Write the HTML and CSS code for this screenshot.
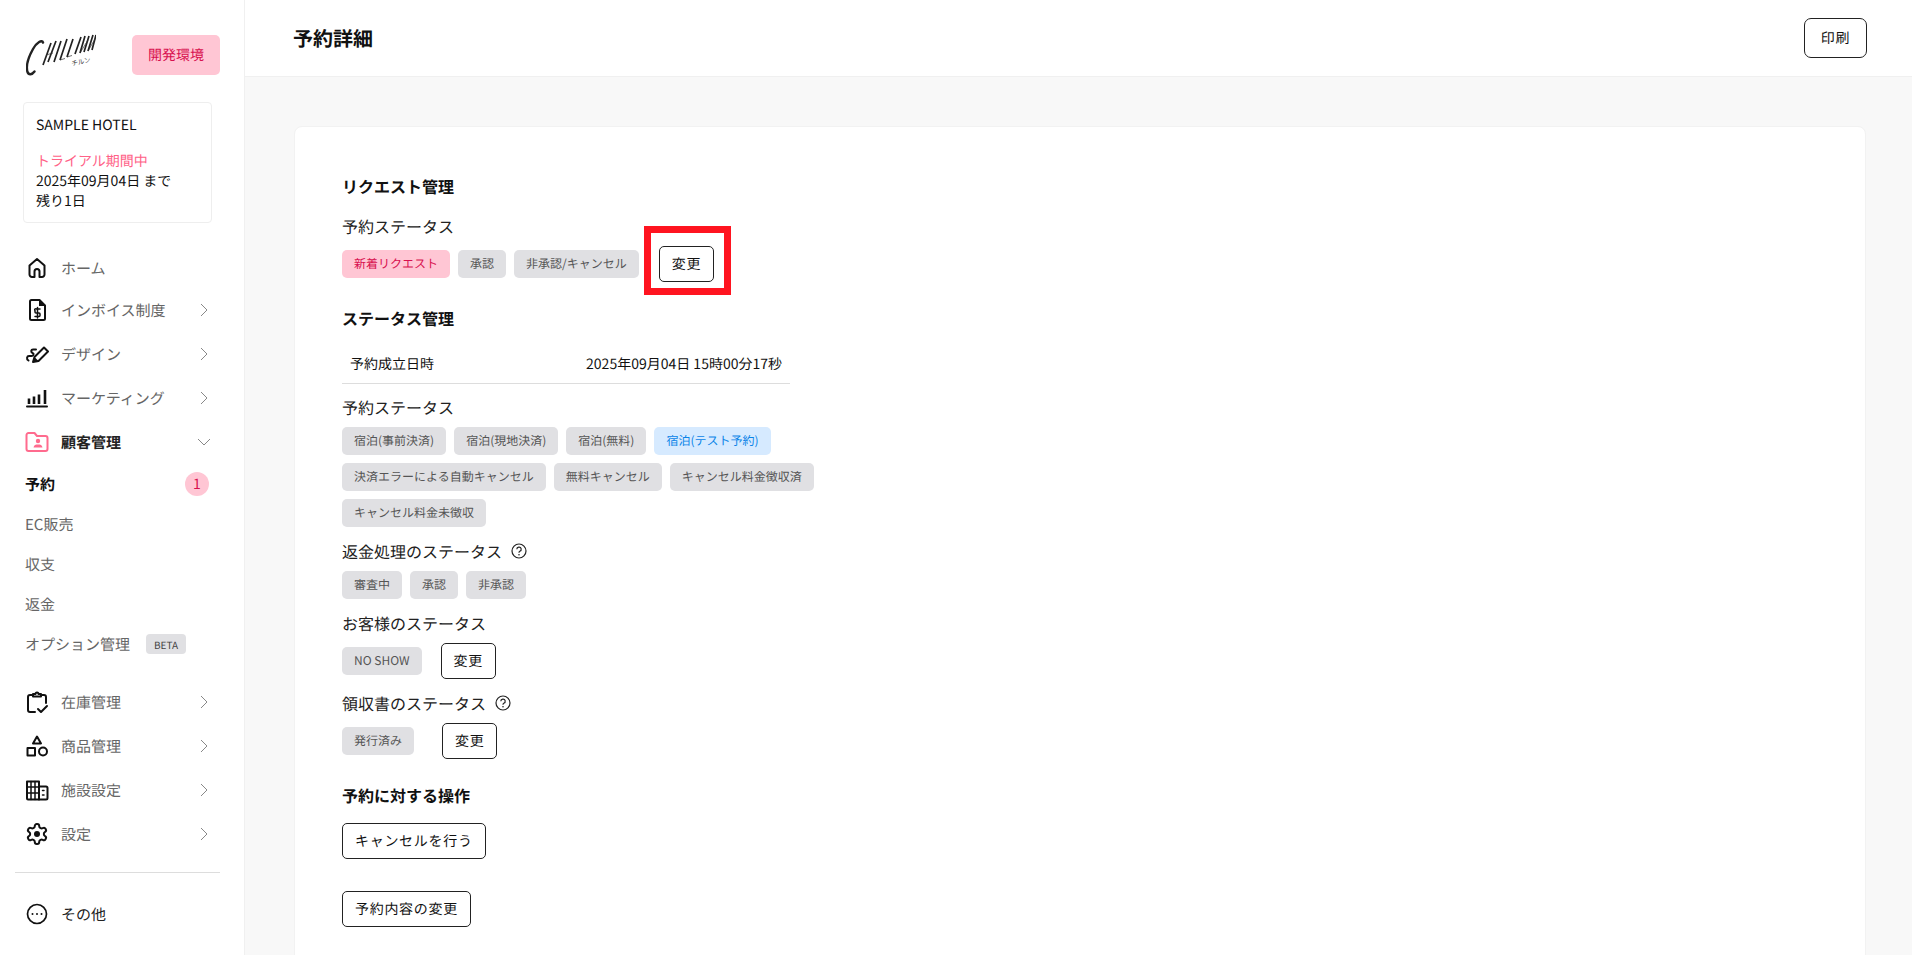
FILE: index.html
```html
<!DOCTYPE html>
<html lang="ja">
<head>
<meta charset="utf-8">
<title>予約詳細</title>
<link rel="stylesheet" href="styles.css">
</head>
<body>
<div class="app">
  <aside class="sidebar">
    <div class="brand">
      <svg class="logo" viewBox="0 0 70 42" aria-hidden="true">
        <path class="logo-c" d="M17 8.500C16 5.500 11 8 7 15C2 24 0 33 1.500 38C2.500 41 6 41 8.500 37.500"/>
        <path class="logo-thick" d="M17 31L25 9M22 28L30 7M28 28L35 7M34 26L41 5M41 23L47 5M49 20L55 3M54 19L59 2M58 18L63 2M62 17L67 1M66 16L70 1"/>
        <path class="logo-thin" d="M20 21L27 19M34 26L39 24.500M41 23L46 21.500M54 19L62 6M62 17L69 5"/>
        <text class="logo-kana" x="46" y="32" transform="rotate(-12 46 32)">チルン</text>
      </svg>
      <span class="env">開発環境</span>
    </div>
    <div class="hotel">
      <p class="hotel-name">SAMPLE HOTEL</p>
      <p class="trial">トライアル期間中</p>
      <p>2025年09月04日 まで</p>
      <p>残り1日</p>
    </div>
    <nav class="nav">
      <a class="nav-item nav-home">
        <svg class="icon" viewBox="0 0 24 24"><path d="M12 3L4.500 9.500V18.500A2.500 2.500 0 0 0 7 21H9.500V15.500A2.500 2.500 0 0 1 14.500 15.500V21H17A2.500 2.500 0 0 0 19.500 18.500V9.500Z"/></svg>
        <span>ホーム</span>
      </a>
      <a class="nav-item">
        <svg class="icon" viewBox="0 0 24 24"><path d="M6.500 2H14.500L20 7.500V20.500A1.500 1.500 0 0 1 18.500 22H6.500A1.500 1.500 0 0 1 5 20.500V3.500A1.500 1.500 0 0 1 6.500 2Z"/><path class="solid" d="M14 2L20 8H14Z"/><path class="thin" d="M15 11H11.500A1 1 0 0 0 10 12.500V14A1 1 0 0 0 11 15H14A1 1 0 0 1 15 16V17.500A1 1 0 0 1 14 18.500H10M12.500 9.500V20"/></svg>
        <span>インボイス制度</span>
        <svg class="chev" viewBox="0 0 8 14"><path d="M1 1L7 7L1 13"/></svg>
      </a>
      <a class="nav-item">
        <svg class="icon" viewBox="0 0 24 24"><path d="M8 20L9.500 15L19 5.500L23 9.500L13.500 19Z"/><path class="solid" d="M8 20L9.500 15L13.500 19Z"/><path d="M11 7.500H8C6 7.500 5.500 10 7.500 11C9.500 12 8.500 14 6.500 14H4C2 14 1 17 3.500 18.500"/></svg>
        <span>デザイン</span>
        <svg class="chev" viewBox="0 0 8 14"><path d="M1 1L7 7L1 13"/></svg>
      </a>
      <a class="nav-item">
        <svg class="icon icon-bars" viewBox="0 0 24 24"><path d="M2 20.500H22"/><path class="bar" d="M4 12.500V18M9 10.500V18M14 8.500V18M20 4V18"/></svg>
        <span>マーケティング</span>
        <svg class="chev" viewBox="0 0 8 14"><path d="M1 1L7 7L1 13"/></svg>
      </a>
      <a class="nav-item nav-current">
        <svg class="icon icon-pink" viewBox="0 0 24 24"><path d="M3.500 3H9.500L12 6H20.500A2 2 0 0 1 22.500 8V19A2 2 0 0 1 20.500 21H3.500A2 2 0 0 1 1.500 19V5A2 2 0 0 1 3.500 3Z"/><circle class="fill-pink" cx="13" cy="11" r="2.200"/><path class="fill-pink" d="M8.500 17.500C9 15 10.500 14.500 13 14.500C15.500 14.500 17 15 17.500 17.500Z"/></svg>
        <span>顧客管理</span>
        <svg class="chev-down" viewBox="0 0 14 8"><path d="M1 1L7 7L13 1"/></svg>
      </a>
      <ul class="subnav">
        <li class="sub-item sub-active"><span>予約</span><span class="count">1</span></li>
        <li class="sub-item"><span>EC販売</span></li>
        <li class="sub-item"><span>収支</span></li>
        <li class="sub-item"><span>返金</span></li>
        <li class="sub-item"><span>オプション管理</span><span class="beta">BETA</span></li>
      </ul>
      <a class="nav-item">
        <svg class="icon" viewBox="0 0 24 24"><path d="M8 5H5A2 2 0 0 0 3 7V20A2 2 0 0 0 5 22H10"/><path d="M16 5H19A2 2 0 0 1 21 7V13"/><path d="M8 6.500V4H10.500A1.500 1.500 0 0 1 13.500 4H16V6.500Z"/><path d="M13 19L16 22L22 16"/></svg>
        <span>在庫管理</span>
        <svg class="chev" viewBox="0 0 8 14"><path d="M1 1L7 7L1 13"/></svg>
      </a>
      <a class="nav-item">
        <svg class="icon" viewBox="0 0 24 24"><path d="M12 2.500L16 9.500H8Z"/><rect x="2.500" y="14" width="7.500" height="7.500"/><circle cx="18" cy="17.500" r="4"/></svg>
        <span>商品管理</span>
        <svg class="chev" viewBox="0 0 8 14"><path d="M1 1L7 7L1 13"/></svg>
      </a>
      <a class="nav-item">
        <svg class="icon" viewBox="0 0 24 24"><path d="M2 3.500H14V21.500H3A1 1 0 0 1 2 20.500Z"/><path d="M14 8.500H21A1.500 1.500 0 0 1 22.500 10V20A1.500 1.500 0 0 1 21 21.500H14"/><path class="thin" d="M6 3.500V21.500M10 3.500V21.500M2 9H14M2 15H14"/><path class="thin" d="M17.500 12.500H19M17.500 17H19"/></svg>
        <span>施設設定</span>
        <svg class="chev" viewBox="0 0 8 14"><path d="M1 1L7 7L1 13"/></svg>
      </a>
      <a class="nav-item">
        <svg class="icon" viewBox="0 0 24 24"><path d="M12.220 2h-.44a2 2 0 0 0-2 2v.18a2 2 0 0 1-1 1.730l-.43.25a2 2 0 0 1-2 0l-.15-.08a2 2 0 0 0-2.730.73l-.22.38a2 2 0 0 0 .73 2.730l.15.1a2 2 0 0 1 1 1.720v.51a2 2 0 0 1-1 1.740l-.15.09a2 2 0 0 0-.73 2.730l.22.38a2 2 0 0 0 2.730.73l.15-.08a2 2 0 0 1 2 0l.43.25a2 2 0 0 1 1 1.730V20a2 2 0 0 0 2 2h.44a2 2 0 0 0 2-2v-.18a2 2 0 0 1 1-1.730l.43-.25a2 2 0 0 1 2 0l.15.08a2 2 0 0 0 2.730-.73l.22-.39a2 2 0 0 0-.73-2.730l-.15-.08a2 2 0 0 1-1-1.740v-.5a2 2 0 0 1 1-1.740l.15-.09a2 2 0 0 0 .73-2.730l-.22-.38a2 2 0 0 0-2.730-.73l-.15.08a2 2 0 0 1-2 0l-.43-.25a2 2 0 0 1-1-1.730V4a2 2 0 0 0-2-2z"/><circle class="solid" cx="12" cy="12" r="3"/></svg>
        <span>設定</span>
        <svg class="chev" viewBox="0 0 8 14"><path d="M1 1L7 7L1 13"/></svg>
      </a>
    </nav>
    <hr class="divider">
    <a class="nav-item nav-other">
      <svg class="icon icon-other" viewBox="0 0 24 24"><circle cx="12" cy="12" r="9.500"/><circle class="solid" cx="7.500" cy="12" r="1"/><circle class="solid" cx="12" cy="12" r="1"/><circle class="solid" cx="16.500" cy="12" r="1"/></svg>
      <span>その他</span>
    </a>
  </aside>

  <main class="main">
    <header class="topbar">
      <h1 class="page-title">予約詳細</h1>
      <button class="btn btn-print">印刷</button>
    </header>
    <div class="content">
      <section class="card">
        <h2 class="heading">リクエスト管理</h2>
        <h3 class="label label-first">予約ステータス</h3>
        <div class="chips chips-action">
          <span class="chip chip-pink">新着リクエスト</span>
          <span class="chip">承認</span>
          <span class="chip">非承認/キャンセル</span>
          <span class="annotated">
            <button class="btn">変更</button>
            <span class="red-box"></span>
          </span>
        </div>

        <h2 class="heading heading-status">ステータス管理</h2>
        <div class="info-row"><span>予約成立日時</span><span>2025年09月04日 15時00分17秒</span></div>

        <h3 class="label label-stay">予約ステータス</h3>
        <div class="chips">
          <span class="chip">宿泊(事前決済)</span>
          <span class="chip">宿泊(現地決済)</span>
          <span class="chip">宿泊(無料)</span>
          <span class="chip chip-blue">宿泊(テスト予約)</span>
          <span class="chip">決済エラーによる自動キャンセル</span>
          <span class="chip">無料キャンセル</span>
          <span class="chip">キャンセル料金徴収済</span>
          <span class="chip">キャンセル料金未徴収</span>
        </div>

        <h3 class="label label-next">返金処理のステータス
          <svg class="help" viewBox="0 0 16 16"><circle cx="8" cy="8" r="7"/><path d="M5.800 6.200A2.200 2.200 0 1 1 8.800 8.300C8.200 8.600 8 9 8 9.800"/><circle class="help-dot" cx="8" cy="11.800" r=".8"/></svg>
        </h3>
        <div class="chips">
          <span class="chip">審査中</span>
          <span class="chip">承認</span>
          <span class="chip">非承認</span>
        </div>

        <h3 class="label label-next">お客様のステータス</h3>
        <div class="chips chips-action">
          <span class="chip">NO SHOW</span>
          <button class="btn btn-guest">変更</button>
        </div>

        <h3 class="label label-receipt">領収書のステータス
          <svg class="help" viewBox="0 0 16 16"><circle cx="8" cy="8" r="7"/><path d="M5.800 6.200A2.200 2.200 0 1 1 8.800 8.300C8.200 8.600 8 9 8 9.800"/><circle class="help-dot" cx="8" cy="11.800" r=".8"/></svg>
        </h3>
        <div class="chips chips-action chips-receipt">
          <span class="chip">発行済み</span>
          <button class="btn btn-receipt">変更</button>
        </div>

        <h2 class="heading heading-ops">予約に対する操作</h2>
        <div class="ops">
          <button class="btn">キャンセルを行う</button>
          <button class="btn">予約内容の変更</button>
        </div>
      </section>
    </div>
  </main>
</div>
</body>
</html>
```

FILE: styles.css
```css
* { box-sizing: border-box; }
html, body { margin: 0; height: 100%; overflow: hidden; }
body {
  font-family: "Noto Sans CJK JP", "Noto Sans", sans-serif;
  color: #111;
  background: #f8f8f8;
  text-rendering: geometricPrecision;
}
h1, h2, h3, p, ul { margin: 0; padding: 0; }
ul { list-style: none; }

.app { display: flex; height: 100vh; }

/* Sidebar */
.sidebar {
  flex: 0 0 245px;
  background: #fff;
  border-right: 1px solid #f0f0f0;
  padding-top: 35px;
}
.brand {
  display: flex;
  justify-content: space-between;
  align-items: center;
  padding: 0 24px 0 26px;
  height: 40px;
}
.logo { width: 70px; height: 42px; display: block; }
.logo-c { fill: none; stroke: #222; stroke-width: 2.400; stroke-linecap: round; }
.logo-thick { fill: none; stroke: #222; stroke-width: 1.700; }
.logo-thin { fill: none; stroke: #333; stroke-width: .7; }
.logo-kana { font-size: 6.500px; fill: #333; }
.env {
  width: 88px;
  height: 40px;
  display: flex;
  align-items: center;
  justify-content: center;
  background: #ffc6d4;
  color: #d8104f;
  font-size: 14px;
  border-radius: 5px;
}
.hotel {
  margin: 27px 0 0 23px;
  width: 189px;
  height: 121px;
  border: 1px solid #eeeeee;
  border-radius: 4px;
  padding: 12px 12px;
  font-size: 14px;
  line-height: 20px;
  color: #111;
}
.hotel-name { margin-bottom: 16px; }
.trial { color: #ff6288; }

.nav { margin-top: 25px; }
.nav-item {
  display: flex;
  align-items: center;
  height: 44px;
  padding-left: 25px;
  font-size: 15px;
  color: #666;
  position: relative;
}
.nav-home { height: 40px; }
.nav-item > span { margin-left: 12px; }
.icon {
  width: 24px;
  height: 24px;
  flex: none;
  fill: none;
  stroke: #111;
  stroke-width: 2;
  stroke-linejoin: round;
  stroke-linecap: round;
}
.icon .solid { fill: #111; stroke: none; }
.icon .thin { stroke-width: 1.500; }
.icon-bars .bar { stroke-width: 2.600; stroke-linecap: butt; }
.icon-pink { stroke: #ff6b8e; }
.icon-pink .fill-pink { fill: #ff6b8e; stroke: none; }
.icon-other { stroke-width: 1.700; }
.chev, .chev-down { fill: none; stroke: #888; stroke-width: 1; margin-left: auto; }
.chev { width: 8px; height: 14px; margin-right: 36px; }
.chev-down { width: 14px; height: 8px; margin-right: 33px; }
.nav-current { color: #222; font-weight: 700; }

.subnav { margin-bottom: 16px; }
.sub-item {
  display: flex;
  align-items: center;
  height: 40px;
  padding: 0 35px 0 25px;
  font-size: 15px;
  color: #666;
}
.sub-active { color: #111; font-weight: 700; justify-content: space-between; }
.count {
  width: 24px;
  height: 24px;
  border-radius: 50%;
  background: #ffc6d4;
  color: #d8104f;
  font-size: 14px;
  font-weight: 400;
  display: flex;
  align-items: center;
  justify-content: center;
}
.beta {
  margin-left: 16px;
  width: 40px;
  height: 20px;
  background: #e0e0e3;
  color: #444;
  border-radius: 4px;
  font-size: 10px;
  display: flex;
  align-items: center;
  justify-content: center;
}
.divider {
  border: 0;
  border-top: 1px solid #dddddd;
  margin: 16px 24px 19px 15px;
}
.nav-other { color: #222; }

/* Main */
.main { flex: 1; min-width: 0; display: flex; flex-direction: column; }
.topbar {
  flex: none;
  height: 77px;
  background: #fff;
  border-bottom: 1px solid #f0f0f0;
  display: flex;
  align-items: center;
  justify-content: space-between;
  padding: 0 45px 0 48px;
}
.page-title { font-size: 20px; line-height: 28px; font-weight: 700; color: #111; }
.content { padding: 49px 46px 0 49px; }
.card {
  background: #fff;
  border: 1px solid #f2f2f2;
  border-radius: 8px;
  padding: 47px 47px 60px;
}
.heading { font-size: 16px; line-height: 24px; font-weight: 700; color: #111; }
.heading-status { margin-top: 24px; }
.heading-ops { margin-top: 24px; }
.label {
  font-size: 16px;
  line-height: 22px;
  padding-bottom: 2px;
  font-weight: 400;
  color: #222;
  margin-bottom: 8px;
  display: flex;
  align-items: center;
}
.label-first { margin-top: 17px; margin-bottom: 7px; }
.label-stay { margin-top: 12px; margin-bottom: 7px; }
.label-next { margin-top: 13px; margin-bottom: 7px; }
.label-receipt { margin-top: 13px; margin-bottom: 7px; }
.chips { display: flex; flex-wrap: wrap; gap: 8px; width: 520px; }
.chips-action { align-items: center; width: auto; }
.chip {
  height: 28px;
  padding: 0 12px 1px;
  background: #e0e0e3;
  color: #555;
  font-size: 12px;
  border-radius: 5px;
  display: inline-flex;
  align-items: center;
  white-space: nowrap;
}
.chip-pink { background: #ffc6d4; color: #d8104f; }
.chip-blue { background: #d6eaff; color: #0a84e8; }

.btn {
  height: 36px;
  padding: 0 12px 1px;
  background: #fff;
  border: 1px solid #222;
  border-radius: 5px;
  font-family: inherit;
  font-size: 14px;
  letter-spacing: .05em;
  color: #111;
  text-rendering: geometricPrecision;
}
.btn-print { height: 40px; width: 63px; padding: 0 0 1px; border-radius: 7px; }
.btn-guest { margin-left: 11px; }
.btn-receipt { margin-left: 20px; }

.annotated { position: relative; margin-left: 12px; display: inline-flex; }
.red-box {
  position: absolute;
  left: -15px;
  right: -17px;
  top: -20px;
  bottom: -13px;
  border: 7px solid #ff1420;
  pointer-events: none;
}

.info-row {
  width: 448px;
  height: 39px;
  margin-top: 15px;
  padding: 0 8px 1px 8px;
  display: flex;
  align-items: center;
  justify-content: space-between;
  font-size: 14px;
  color: #111;
  border-bottom: 1px solid #dddddd;
}
.help {
  width: 16px;
  height: 16px;
  margin-left: 9px;
  fill: none;
  stroke: #222;
  stroke-width: 1.200;
}
.help .help-dot { fill: #222; stroke: none; }

.ops { display: flex; flex-direction: column; align-items: flex-start; gap: 32px; margin-top: 16px; }
```
